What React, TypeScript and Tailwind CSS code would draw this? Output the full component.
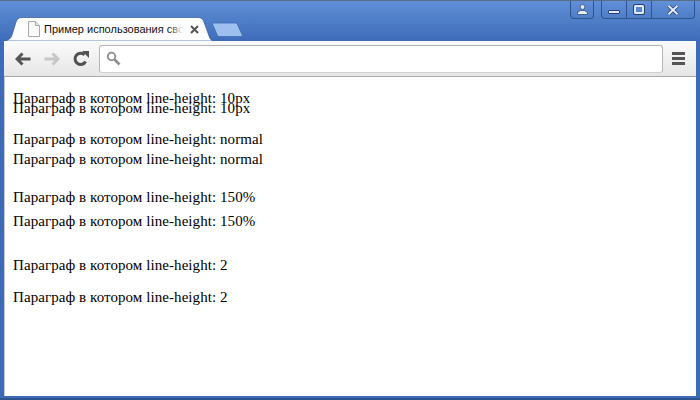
import React from 'react';

const lines = [
  { label: '10px', leading: 'leading-[10px]' },
  { label: 'normal', leading: 'leading-[20px]' },
  { label: '150%', leading: 'leading-[24px]' },
  { label: '2', leading: 'leading-[32px]' },
];

function TabShape() {
  return (
    <svg className="absolute inset-0" width="210" height="24" viewBox="0 0 210 24">
      <path
        d="M0 24 C5 23.5 7 21 8 18 L12 5 C13 2 15 0.5 18 0.5 L194 0.5 C197 0.5 199 2 200 5 L205 19 C206 22 207 23.5 210 24 Z"
        fill="#fdfdfd"
        stroke="#2f5a9e"
        strokeWidth="0.7"
      />
    </svg>
  );
}

function NewTabShape() {
  return (
    <svg width="31" height="15" viewBox="0 0 31 15">
      <path
        d="M0.5 1 L23 1 C24.5 1 25 1.5 25.6 3 L30 12.5 C30.5 14 30 14.5 28 14.5 L8 14.5 C6.5 14.5 5.5 14 5 12.5 L0.5 2 Z"
        fill="#9dc0ee"
        stroke="#3f6bb0"
        strokeWidth="0.8"
      />
    </svg>
  );
}

function PageIcon() {
  return (
    <svg width="12" height="16" viewBox="0 0 12 16">
      <path d="M0.5 0.5 H7.5 L11.5 4.5 V15.5 H0.5 Z" fill="#fafafa" stroke="#a8a8a8" />
      <path d="M7.5 0.5 V4.5 H11.5" fill="#e8e8e8" stroke="#a8a8a8" />
    </svg>
  );
}

function CloseIcon() {
  return (
    <svg width="9" height="9" viewBox="0 0 9 9">
      <path d="M1 1 L8 8 M8 1 L1 8" stroke="#555" strokeWidth="2" />
    </svg>
  );
}

function ArrowIcon({ color, flip }: { color: string; flip?: boolean }) {
  return (
    <svg width="16" height="14" viewBox="0 0 16 14" className={flip ? '-scale-x-100' : ''}>
      <path d="M7.5 1.5 L2 7 L7.5 12.5 M2.5 7 H15.5" fill="none" stroke={color} strokeWidth="3" />
    </svg>
  );
}

function ReloadIcon() {
  return (
    <svg width="16" height="16" viewBox="0 0 16 16">
      <path d="M12.6 10.5 A5.6 5.6 0 1 1 11.5 3.8" fill="none" stroke="#505050" strokeWidth="3" />
      <path d="M9 0 H16 V7 Z" fill="#505050" />
    </svg>
  );
}

function SearchIcon() {
  return (
    <svg width="15" height="15" viewBox="0 0 15 15">
      <circle cx="5.5" cy="5.5" r="3.8" fill="#fff" stroke="#8d8d8d" strokeWidth="1.8" />
      <path d="M8.5 8.5 L13.5 13.5" stroke="#8d8d8d" strokeWidth="2.6" />
    </svg>
  );
}

function WindowButton({ width, children }: { width: string; children: React.ReactNode }) {
  return <div className={`${width} flex items-center justify-center`}>{children}</div>;
}

export default function App() {
  return (
    <div className="w-[700px] h-[400px] flex flex-col bg-[#3e6bb8] border-t border-[#5a6b85] border-b-2 border-b-[#2f5590] overflow-hidden font-['Liberation_Sans',sans-serif]">
      <div className="h-[40px] shrink-0 flex justify-between items-start pl-[4px] pr-[5px] bg-gradient-to-b from-[#5f8fd6] to-[#3f6cb9]">
        <div className="flex items-start pt-[16px]">
          <div className="relative w-[210px] h-[24px] shrink-0">
            <TabShape />
            <div className="relative flex items-center h-[24px] pl-[24px]">
              <PageIcon />
              <div className="relative w-[139px] ml-[4px] overflow-hidden whitespace-nowrap text-[11px] leading-[16px] text-[#111]">
                Пример использования свойства
                <div className="absolute right-0 top-0 h-full w-[14px] bg-gradient-to-r from-transparent to-[#fdfdfd]" />
              </div>
              <div className="ml-[7px] flex">
                <CloseIcon />
              </div>
            </div>
          </div>
          <div className="-ml-[2px] mt-[5px]">
            <NewTabShape />
          </div>
        </div>
        <div className="flex items-start">
          <div className="w-[24px] h-[18px] ml-[1px] mr-[7px] flex items-center justify-center bg-gradient-to-b from-[#6090d8] to-[#4f7dc8] border border-t-0 border-[#2f5490] rounded-b-[4px]">
            <svg width="11" height="11" viewBox="0 0 11 11">
              <circle cx="5.5" cy="3" r="2.4" fill="#e8eef8" stroke="#24416f" strokeWidth="0.7" />
              <path d="M0.5 10.5 V8.5 L3.5 6.5 H7.5 L10.5 8.5 V10.5 Z" fill="#e8eef8" stroke="#24416f" strokeWidth="0.7" />
            </svg>
          </div>
          <div className="h-[18px] flex bg-gradient-to-b from-[#6090d8] to-[#4f7dc8] border border-t-0 border-[#2f5490] rounded-b-[4px] divide-x divide-[#2f5490]">
            <WindowButton width="w-[25px]">
              <div className="w-[12px] h-[4px] mt-[5px] bg-[#dfe8f6] border border-[#24416f] rounded-[1px]" />
            </WindowButton>
            <WindowButton width="w-[25px]">
              <div className="w-[10px] h-[9px] border-2 border-[#dfe8f6] outline outline-1 outline-[#24416f] rounded-[1px]" />
            </WindowButton>
            <WindowButton width="w-[42px]">
              <svg width="12" height="10" viewBox="0 0 12 10">
                <path d="M1.5 0.8 L10.5 9.2 M10.5 0.8 L1.5 9.2" stroke="#24416f" strokeWidth="3.4" />
                <path d="M1.5 0.8 L10.5 9.2 M10.5 0.8 L1.5 9.2" stroke="#e8eef8" strokeWidth="1.9" />
              </svg>
            </WindowButton>
          </div>
        </div>
      </div>

      <div className="flex-1 min-h-0 flex flex-col mx-[4px] mb-[2px] bg-white">
        <div className="h-[36px] shrink-0 flex items-center bg-gradient-to-b from-[#fbfbfb] to-[#e6e6e6] border-b border-[#a9a9a9]">
          <div className="ml-[11px] flex">
            <ArrowIcon color="#555" />
          </div>
          <div className="ml-[13px] flex">
            <ArrowIcon color="#c6c6c6" flip />
          </div>
          <div className="ml-[13px] flex">
            <ReloadIcon />
          </div>
          <div className="ml-[10px] w-[564px] h-[28px] flex items-center pl-[6px] bg-white border border-[#b5b5b5] border-b-[#d0d0d0] rounded-[3px]">
            <SearchIcon />
          </div>
          <div className="ml-[9px] w-[13px] flex flex-col gap-[2px]">
            <div className="h-[3px] bg-[#555]" />
            <div className="h-[3px] bg-[#555]" />
            <div className="h-[3px] bg-[#555]" />
          </div>
        </div>

        <div className="flex-1 pl-[8px] pt-[16px] border-l border-[#c8c8c8] text-[15px] tracking-[0.07px] text-black font-['Liberation_Serif',serif]">
          {lines.map((line, i) => (
            <div key={line.label} className={i > 0 ? 'mt-[16px]' : ''}>
              <p className={line.leading}>Параграф в котором line-height: {line.label}</p>
              <p className={line.leading}>Параграф в котором line-height: {line.label}</p>
            </div>
          ))}
        </div>
      </div>
    </div>
  );
}
